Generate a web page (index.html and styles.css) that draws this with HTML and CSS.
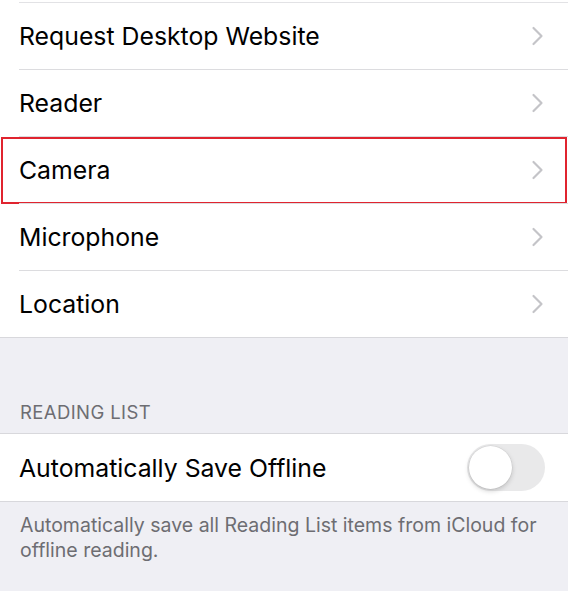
FILE: index.html
```html
<!DOCTYPE html>
<html>
<head>
<meta charset="utf-8">
<link rel="stylesheet" href="styles.css">
</head>
<body>
<div class="page">
  <div class="group top-group">
    <div class="row"><span class="label">Request Desktop Website</span><svg class="chev" viewBox="0 0 12 20"><path d="M2 2 L10 10 L2 18" /></svg></div>
    <div class="row"><span class="label">Reader</span><svg class="chev" viewBox="0 0 12 20"><path d="M2 2 L10 10 L2 18" /></svg></div>
    <div class="row highlighted"><span class="label">Camera</span><svg class="chev" viewBox="0 0 12 20"><path d="M2 2 L10 10 L2 18" /></svg></div>
    <div class="row"><span class="label">Microphone</span><svg class="chev" viewBox="0 0 12 20"><path d="M2 2 L10 10 L2 18" /></svg></div>
    <div class="row last"><span class="label">Location</span><svg class="chev" viewBox="0 0 12 20"><path d="M2 2 L10 10 L2 18" /></svg></div>
  </div>
  <div class="section-header">READING LIST</div>
  <div class="group">
    <div class="row last"><span class="label">Automatically Save Offline</span><span class="toggle"><span class="knob"></span></span></div>
  </div>
  <div class="footer">Automatically save all Reading List items from iCloud for offline reading.</div>
</div>
</body>
</html>
```
FILE: styles.css
```css
html, body {
  margin: 0;
  padding: 0;
  background: #efeff4;
}
body {
  font-family: Inter, "Noto Sans", sans-serif;
  -webkit-font-smoothing: antialiased;
}
.page {
  width: 568px;
  height: 591px;
  overflow: hidden;
  background: #efeff4;
}
.group {
  background: #fff;
  border-top: 1px solid #d8d8dc;
  border-bottom: 1px solid #d8d8dc;
}
.top-group {
  border-top: none;
  padding-top: 2px;
}
.row {
  position: relative;
  display: flex;
  align-items: center;
  justify-content: space-between;
  height: 66px;
  margin-left: 19px;
  padding-right: 24px;
  border-top: 1px solid #dcdcdf;
  box-sizing: content-box;
}
.top-group .row:first-child {
  border-top: 1px solid #e2e2e5;
}
.group:not(.top-group) .row {
  border-top: none;
  height: 67px;
  padding-right: 23px;
}
.label {
  font-size: 24.8px;
  color: #000;
  letter-spacing: 0;
}
.chev {
  width: 13px;
  height: 20px;
  fill: none;
  stroke: #c4c4c8;
  stroke-width: 2.2;
  stroke-linecap: round;
  stroke-linejoin: round;
}
.highlighted::after {
  content: "";
  position: absolute;
  left: -18px;
  right: 1px;
  top: 0px;
  bottom: -1px;
  border: 2px solid #e0242f;
  pointer-events: none;
}
.section-header {
  padding: 63px 0 10px 20px;
  font-size: 18.5px;
  line-height: 22px;
  color: #6d6d72;
  letter-spacing: 0.4px;
}
.toggle {
  position: relative;
  width: 78px;
  height: 47px;
  border-radius: 24px;
  background: #e9e9ea;
  box-sizing: border-box;
}
.knob {
  position: absolute;
  left: 2px;
  top: 2px;
  width: 43px;
  height: 43px;
  border-radius: 50%;
  background: #fff;
  box-shadow: 0 0 0 0.5px rgba(0,0,0,0.08), 0 2px 5px rgba(0,0,0,0.18);
}
.footer {
  padding: 11px 20px 0 20px;
  font-size: 19.5px;
  line-height: 25px;
  color: #6d6d72;
}
```
